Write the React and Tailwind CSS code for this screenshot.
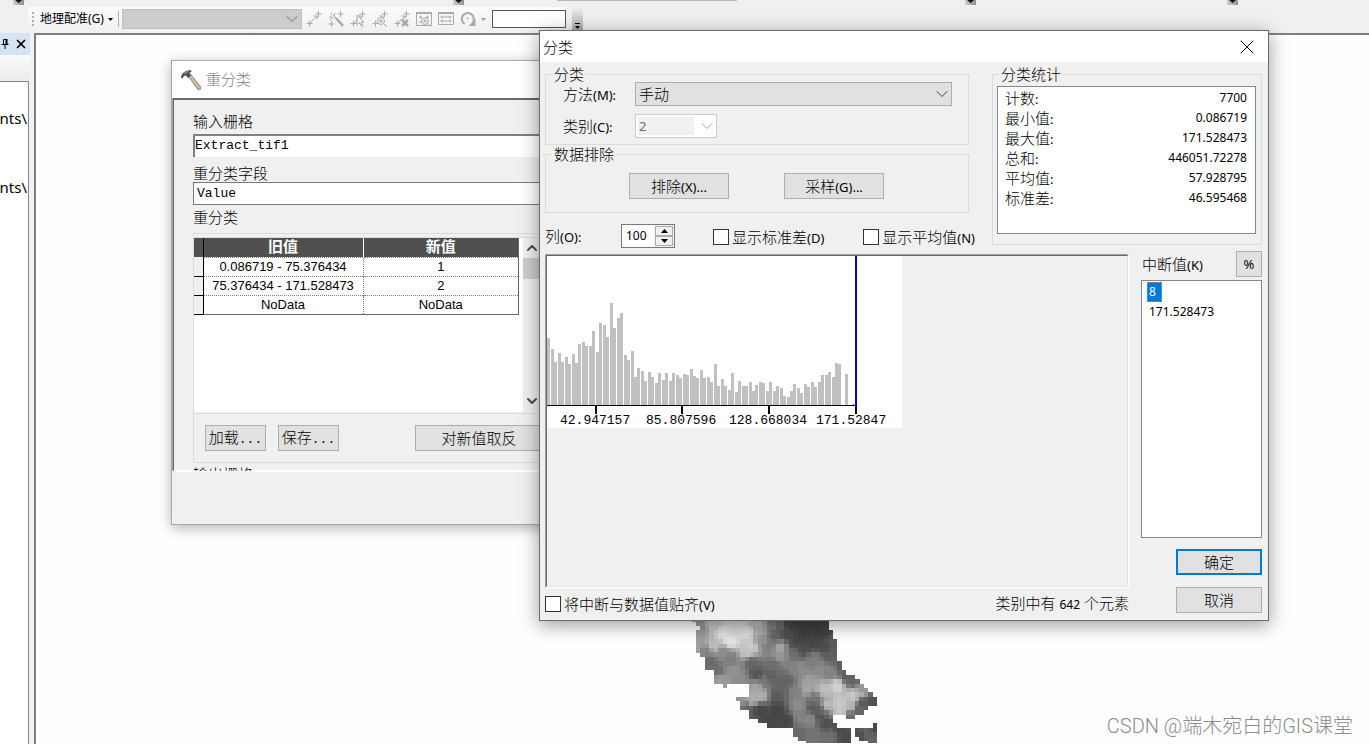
import React, { useState } from 'react';
import { ChevronDown, ChevronUp, X } from 'lucide-react';

// [x, height] of every histogram column
const BARS = [
  [0, 67], [4, 56], [7, 43], [11, 52], [14, 43], [18, 48], [21, 41], [25, 51], [28, 42], [31, 61],
  [35, 63], [38, 59], [42, 59], [45, 74], [49, 53], [52, 82], [56, 80], [59, 68], [63, 102], [66, 77],
  [70, 87], [73, 92], [77, 50], [80, 45], [84, 54], [87, 28], [90, 37], [94, 34], [97, 24], [101, 33],
  [104, 28], [108, 22], [111, 32], [115, 25], [118, 32], [122, 24], [125, 32], [129, 30], [132, 27], [136, 31],
  [139, 30], [143, 36], [146, 29], [149, 27], [153, 35], [156, 27], [160, 28], [163, 23], [167, 41], [170, 19],
  [174, 26], [177, 19], [181, 15], [184, 32], [188, 13], [191, 24], [195, 19], [198, 19], [202, 23], [205, 14],
  [208, 20], [212, 23], [215, 22], [219, 14], [222, 23], [226, 14], [229, 19], [233, 17], [236, 9], [240, 8],
  [243, 14], [246, 21], [250, 17], [253, 12], [257, 21], [260, 18], [264, 23], [267, 18], [271, 23], [274, 30],
  [278, 30], [281, 33], [285, 28], [288, 42], [291, 41], [298, 31], [305, 1],
];

const TICKS = [
  { x: 48, label: '42.947157', textX: 13 },
  { x: 134, label: '85.807596', textX: 99 },
  { x: 221, label: '128.668034', textX: 182 },
  { x: 308, label: '171.52847', textX: 269 },
];

const STATS = [
  ['计数', '7700'],
  ['最小值', '0.086719'],
  ['最大值', '171.528473'],
  ['总和', '446051.72278'],
  ['平均值', '57.928795'],
  ['标准差', '46.595468'],
];

const RECLASS_ROWS = [
  ['0.086719 - 75.376434', '1'],
  ['75.376434 - 171.528473', '2'],
  ['NoData', 'NoData'],
];

// filled column spans per raster row
const RASTER_ROWS = [
  [[0, 31]], [[1, 31]], [[2, 31]], [[1, 32]], [[1, 32]], [[1, 33]], [[1, 33]], [[1, 33]], [[2, 33]], [[3, 33]],
  [[3, 34]], [[3, 34]], [[5, 35]], [[5, 37]], [[5, 38]], [[7, 8], [13, 39]], [[13, 40]], [[13, 41]], [[10, 42]],
  [[11, 42]], [[11, 40]], [[13, 39]], [[13, 32], [35, 37]], [[15, 32]], [[17, 33], [41, 42]], [[23, 36], [37, 42]],
  [[23, 36], [37, 42]], [[24, 36], [38, 42]], [[26, 36], [40, 42]],
];

// [x, y, gray] elevation samples
const SAMPLES = [
  [60, 60, 150], [50, 110, 160], [100, 45, 200], [130, 70, 225], [170, 60, 215], [150, 95, 228], [200, 70, 222],
  [215, 110, 205], [100, 110, 190], [240, 60, 175], [235, 40, 190], [240, 100, 150], [270, 55, 130], [300, 50, 110],
  [285, 80, 100], [350, 45, 65], [400, 45, 62], [440, 50, 68], [350, 90, 68], [400, 100, 70], [455, 100, 90],
  [320, 75, 78], [330, 45, 70], [375, 70, 62], [420, 75, 64], [430, 112, 76], [370, 118, 76], [345, 112, 80],
  [450, 140, 95], [300, 115, 165], [300, 140, 150], [265, 110, 125], [340, 130, 110], [80, 125, 130], [130, 130, 140],
  [200, 125, 195], [90, 160, 105], [110, 185, 110], [150, 150, 125], [160, 185, 145], [120, 210, 155], [135, 235, 160],
  [180, 210, 140], [215, 165, 100], [230, 195, 85], [270, 200, 95], [280, 170, 110], [250, 215, 120], [230, 235, 165],
  [240, 260, 175], [215, 270, 175], [180, 275, 150], [190, 295, 110], [200, 305, 90], [240, 300, 70], [290, 300, 68],
  [320, 335, 70], [270, 340, 70], [300, 240, 100], [320, 210, 100], [290, 260, 90], [340, 180, 130], [360, 180, 140],
  [420, 180, 138], [400, 150, 125], [450, 190, 130], [390, 220, 160], [380, 240, 165], [350, 250, 130], [430, 240, 190],
  [470, 230, 210], [480, 280, 200], [520, 260, 200], [440, 290, 190], [540, 250, 175], [510, 290, 185], [480, 305, 200],
  [500, 200, 95], [490, 170, 90], [520, 215, 100], [545, 240, 150], [550, 280, 90], [580, 275, 80], [535, 300, 100],
  [510, 322, 110], [400, 295, 90], [400, 270, 115], [355, 290, 140], [360, 330, 130], [390, 330, 135], [420, 320, 85],
  [440, 345, 80], [480, 360, 75], [500, 390, 75], [450, 380, 110], [400, 380, 115], [360, 370, 105], [430, 300, 110],
  [560, 370, 100], [540, 380, 80], [580, 350, 70], [575, 395, 100],
];

const grayAt = (x, y) => {
  let sum = 0;
  let total = 0;
  SAMPLES.forEach(([sx, sy, g]) => {
    const d = (sx - x) ** 2 + (sy - y) ** 2 + 20;
    const w = 1 / (d * d);
    sum += w * g;
    total += w;
  });
  return Math.round(sum / total);
};

const RasterLayer = () => (
  <svg className="absolute left-[644px] top-[574px] w-[220px] h-[134px]" viewBox="0 0 660 402" shapeRendering="crispEdges">
    {RASTER_ROWS.map((spans, r) =>
      spans.map(([from, to]) =>
        Array.from({ length: to - from }, (_, i) => {
          const x = 34.75 + (from + i) * 13.25;
          const y = 24 + r * 13.3;
          const g = grayAt(x + 6, y + 6);
          return <rect key={`${r}-${from + i}`} x={x} y={y} width="13.5" height="13.5" fill={`rgb(${g},${g},${g})`} />;
        })
      )
    )}
  </svg>
);

// Latin part of a label, a bit smaller than the Chinese text
const En = ({ children }) => <span className="text-[13px] font-normal">{children}</span>;

const Dots = () => <span className="font-['Liberation_Mono',monospace] text-[13px]">...</span>;

const points = <path d="M5.5 12.5 12 6M13.5 1v6M10.5 4h6M4.5 10.500v6M1.5 13.500h6M8.500 6h3.500v3.500" />;

const TOOL_ICONS = [
  { name: '添加控制点', body: points },
  { name: '自动配准', body: <><path d="M13.5 1v6M10.5 4h6M4.500 11v6M1.500 14h6M9 8l7 8" /><path d="M9 8l7 8" strokeWidth="2.500" /><path d="M4 3l1 2M8 3l-1 3M2 7h3M7 7l-4 3M6 5l3 3" /></> },
  { name: '选择链接', body: <>{points}<path d="M8 5v10l2.500-2.500 2 4 1.500-1-2-3.500h3z" fill="#f4f4f4" /></> },
  { name: '缩放至链接', body: <>{points}<circle cx="10" cy="11" r="3.500" fill="#f4f4f4" /><path d="M8 11h4M10 9v4M12.500 13.500l3 3" /></> },
  { name: '删除链接', body: <>{points}<path d="M9 10l6 6M15 10l-6 6" strokeWidth="2.500" /></> },
  { name: '查看器', body: <><path d="M1.500 2.500h15v13h-15z" /><path d="M1.500 3h15" strokeWidth="2" /><path d="M4 7h3M5.500 5.500v3M11 7h3M12.500 5.500v3M4 12h3" /><circle cx="10" cy="11" r="3.500" fill="#f4f4f4" /><path d="M8 11h4M10 9v4M12.500 13.500l3 3" /></> },
  { name: '链接表', body: <><path d="M1.500 2.500h15v12h-15z" /><path d="M1.500 3h15" strokeWidth="2" /><path d="M3.500 7h11M5 5.500v3M13 5.500v3M3.500 11h11M5 9.500v3M13 9.500v3" /></> },
  { name: '旋转', body: <><path d="M5.500 14A6 6 0 1 1 14 12" strokeWidth="2" /><path d="M16.500 9v7h-7z" fill="#a9a9a9" stroke="none" /><path d="M7.500 8.500h2M8.500 7.500v2" /></> },
];

const Nub = () => (
  <div className="w-[11px] h-[5px] shrink-0 bg-linear-to-r from-[#d0d0d0] to-[#8f8f8f] flex justify-center">
    <svg className="w-[7px] h-1" viewBox="0 0 7 4"><path d="M0 0h7L3.500 3z" fill="#111" /></svg>
  </div>
);

const Toolbar = () => (
  <header className="shrink-0 bg-[#f0f0f0] font-normal">
    <div className="flex h-[7px]">
      <div className="w-6 flex justify-end"><Nub /></div>
      <div className="w-[440px] flex justify-end"><Nub /></div>
      <div className="w-[512px] flex justify-between">
        <div className="ml-[93px] w-[180px] h-px bg-[#b8b8b8]" />
        <Nub />
      </div>
      <div className="w-[262px] flex justify-end"><Nub /></div>
    </div>
    <div className="flex h-[26px] ml-7">
      <div className="flex items-center bg-linear-to-b from-[#fbfbfb] to-[#f0f0f0] pl-1 pb-[2px]">
        <div className="w-0 h-[14px] border-l-2 border-dotted border-[#b0b0b0]" />
        <button className="flex items-center gap-1 ml-[6px] text-xs whitespace-nowrap">
          地理配准(G)
          <svg className="w-[5px] h-[3px]" viewBox="0 0 5 3"><path d="M0 0h5L2.500 3z" /></svg>
        </button>
        <div className="w-px h-4 bg-[#b0b0b0] ml-[5px] mr-[3px]" />
        <div className="relative">
          <select disabled aria-label="配准图层" className="appearance-none block w-[180px] h-5 bg-[#cccccc] border border-[#bfbfbf]" />
          <ChevronDown className="absolute right-0 top-0 size-5 text-[#a0a0a0]" strokeWidth={1.5} />
        </div>
        <div className="flex items-center gap-1 ml-[3px]">
          {TOOL_ICONS.map((icon) => (
            <button key={icon.name} disabled aria-label={icon.name} className="size-[18px]">
              <svg className="size-[18px]" viewBox="0 0 18 18" fill="none" stroke="#a9a9a9">{icon.body}</svg>
            </button>
          ))}
        </div>
        <svg className="w-[5px] h-[3px] ml-1" viewBox="0 0 5 3"><path d="M0 0h5L2.500 3z" fill="#a0a0a0" /></svg>
        <input aria-label="旋转角度" className="w-[74px] h-[18px] ml-[6px] bg-white border border-[#555]" />
      </div>
      <div className="w-[11px] ml-[6px] bg-linear-to-b from-[#f0f0f0] to-[#a0a0a0] flex flex-col items-center justify-end gap-[2px] pb-1">
        <div className="w-[5px] h-px bg-black" />
        <svg className="w-[5px] h-[3px]" viewBox="0 0 5 3"><path d="M0 0h5L2.500 3z" /></svg>
      </div>
    </div>
  </header>
);

const ContentsPanel = () => (
  <aside className="w-[34px] shrink-0 flex flex-col bg-[#f3f1f3] overflow-hidden font-normal">
    <div className="w-[30px] h-[22px] bg-[#d6e3f2] flex items-center gap-[6px]">
      <button aria-label="固定" className="ml-px">
        <svg className="w-2 h-[10px]" viewBox="0 0 8 10" fill="none" stroke="#000"><path d="M2.500 5.500v-5h3M0.500 5.500h7M4 6v4" /><path d="M5.500 0v6" strokeWidth="2" /></svg>
      </button>
      <button aria-label="关闭"><X className="size-[14px] -m-px" strokeWidth={3} /></button>
    </div>
    <div className="w-[30px] h-[26px] bg-linear-to-b from-[#fafafa] to-[#ececec]" />
    <div className="w-[29px] flex-1 bg-white border-t border-r border-[#828790] flex flex-col items-end pr-px pt-[26px] gap-[49px] text-[15px] leading-5">
      <span className="whitespace-nowrap">nts\</span>
      <span className="whitespace-nowrap">nts\</span>
    </div>
  </aside>
);

const Hammer = () => (
  <svg className="size-[22px]" viewBox="0 0 22 22">
    <path d="M8 7l2.500-2L21 18l-.5 2.500-2.500.5z" fill="#b9a78c" stroke="#8b8171" strokeWidth=".6" />
    <path d="M10 7l9.500 12" stroke="#ded2bd" />
    <path d="M1 9c0-3 1.500-5 4-6.500L9.500 1 12 2l-2.500 2 1.500 2.500-3 2.500-2-2.500L4 7 2.500 9.500z" fill="#4d5358" />
    <path d="M4 4.500 8.500 2.500" stroke="#a3abb1" />
  </svg>
);

const pushButton = 'h-[26px] bg-[#e1e1e1] border border-[#adadad] hover:bg-[#e5f1fb] hover:border-[#0078d7]';

const ReclassifyWindow = () => (
  <section className="absolute left-[171px] top-[60px] w-[430px] flex flex-col bg-[#f0f0f0] border border-[#a8a8a8] shadow-[0_3px_12px_rgba(0,0,0,0.3)] text-[15px]">
    <div className="h-[37px] flex items-center bg-white pl-2 gap-1 text-[#808080]">
      <Hammer />
      <h1>重分类</h1>
    </div>
    <div className="h-[373px] overflow-hidden border-l border-[#a0a0a0]">
      <div className="h-full border-t-2 border-l border-b border-t-[#696969] border-l-[#696969] border-b-white pl-[19px] pt-[11px] leading-5">
        <label htmlFor="in-raster" className="block h-[23px]">输入栅格</label>
        <input
          id="in-raster"
          defaultValue="Extract_tif1"
          className="block w-full h-[23px] pb-[2px] bg-white border-t-2 border-l-2 border-[#808080] font-['Liberation_Mono',monospace] font-normal text-[13px]"
        />
        <label htmlFor="field" className="block h-[25px] pt-[6px]">重分类字段</label>
        <select id="field" className="appearance-none block w-full h-[23px] pl-[3px] bg-white border border-[#7a7a7a] font-['Liberation_Mono',monospace] font-normal text-[13px]">
          <option>Value</option>
        </select>
        <p className="h-7 pt-[2px]">重分类</p>
        <div className="border border-[#dcdcdc] pt-[3px]">
          <div className="h-[175px] flex bg-white border-t border-[#dcdcdc]">
            <table className="w-[325px] self-start table-fixed border-collapse text-center font-['Liberation_Sans','Noto_Sans_CJK_SC',sans-serif] font-normal text-[13px] leading-[18px] border-r border-b border-[#696969]">
              <colgroup>
                <col className="w-[9px]" />
                <col className="w-[160px]" />
                <col />
              </colgroup>
              <thead>
                <tr className="bg-[#505050] text-white text-[15px]">
                  <th className="border-r border-black" />
                  <th className="border-l border-white h-[19px]">旧值</th>
                  <th className="border-l border-white">新值</th>
                </tr>
              </thead>
              <tbody>
                {RECLASS_ROWS.map(([oldValue, newValue]) => (
                  <tr key={oldValue} className="h-[19px]">
                    <td className="bg-[#f0f0f0] border-r border-b border-black" />
                    <td className="border-t border-r border-dotted border-[#808080]">{oldValue}</td>
                    <td className="border-t border-dotted border-t-[#808080]">{newValue}</td>
                  </tr>
                ))}
              </tbody>
            </table>
            <div className="w-[17px] ml-1 bg-[#f0f0f0] flex flex-col items-center">
              <ChevronUp className="size-4 my-[2px] text-[#505050]" strokeWidth={3} />
              <div className="w-full h-[21px] bg-[#cdcdcd]" />
              <ChevronDown className="size-4 mt-auto mb-[3px] text-[#505050]" strokeWidth={3} />
            </div>
          </div>
          <div className="flex mt-px pt-[11px] pb-[11px] pl-[11px] border-t border-[#dcdcdc]">
            <button className={`${pushButton} w-[61px]`}>加载<Dots /></button>
            <button className={`${pushButton} w-[61px] ml-3`}>保存<Dots /></button>
            <button className={`${pushButton} w-[128px] ml-[76px]`}>对新值取反</button>
          </div>
        </div>
        <p className="pt-px">输出栅格</p>
      </div>
    </div>
    <div className="h-[53px] border-t border-white" />
  </section>
);

const Histogram = () => (
  <svg className="w-[355px] h-[172px] bg-white" viewBox="0 0 355 172">
    <g shapeRendering="crispEdges">
      {BARS.map(([x, h]) => (
        <rect key={x} x={x} y={149 - h} width="3" height={h} fill="#c0c0c0" />
      ))}
      <rect x="0" y="149" width="308" height="1" />
      {TICKS.map((tick) => (
        <rect key={tick.x} x={tick.x} y="149" width="2" height="9" />
      ))}
      <rect x="308" y="0" width="2" height="150" fill="#0000e6" />
    </g>
    {TICKS.map((tick) => (
      <text key={tick.label} x={tick.textX} y="168" className="font-['Liberation_Mono',monospace] font-normal text-[13px]">{tick.label}</text>
    ))}
  </svg>
);

const CheckBox = ({ label, hotkey }) => (
  <label className="flex items-center gap-[3px] whitespace-nowrap">
    <input type="checkbox" className="appearance-none size-4 bg-white border border-[#333] checked:bg-[#0078d7]" />
    <span>{label}<En>({hotkey})</En></span>
  </label>
);

const ClassifyWindow = () => {
  const [columns, setColumns] = useState(100);

  return (
    <section className="absolute left-[539px] top-[30px] w-[730px] bg-[#f0f0f0] border border-[#6b6b6b] shadow-[0_4px_18px_rgba(0,0,0,0.4)] text-[15px] leading-4">
      <div className="h-[31px] flex items-center justify-between bg-white pl-[3px] pr-[9px]">
        <h1>分类</h1>
        <button aria-label="关闭"><X className="size-6" strokeWidth={1} /></button>
      </div>
      <div className="pl-[5px] pr-[6px] pt-1 pb-[7px]">
        <div className="flex justify-between">
          <div className="w-[430px]">
            <fieldset className="mr-[6px] border border-[#dcdcdc] pl-[17px] pr-4 pb-[6px]">
              <legend className="-ml-[11px] px-[2px]">分类</legend>
              <div className="flex items-center">
                <label htmlFor="method" className="w-[72px]">方法<En>(M):</En></label>
                <div className="relative flex-1">
                  <select id="method" className="appearance-none block w-full h-6 pl-[3px] bg-[#e1e1e1] border border-[#adadad]">
                    <option>手动</option>
                  </select>
                  <ChevronDown className="absolute right-0 top-[2px] size-5 text-[#444] pointer-events-none" strokeWidth={1.2} />
                </div>
              </div>
              <div className="flex items-center mt-2">
                <label htmlFor="classes" className="w-[72px]">类别<En>(C):</En></label>
                <div className="flex items-center w-[82px] h-6 pl-[2px] bg-white border border-[#cccccc]">
                  <input id="classes" disabled defaultValue="2" className="w-14 h-[18px] pl-px bg-[#f0f0f0] text-[13px] font-normal text-[#6d6d6d]" />
                  <ChevronDown className="size-5 ml-[3px] shrink-0 text-[#a8a8a8]" strokeWidth={1.2} />
                </div>
              </div>
            </fieldset>
            <fieldset className="mt-px mr-[6px] border border-[#dcdcdc] pb-[13px]">
              <legend className="ml-[6px] px-[2px]">数据排除</legend>
              <div className="flex pl-[83px] pt-[11px] gap-[55px]">
                <button className={`${pushButton} w-[100px]`}>排除<En>(X)...</En></button>
                <button className={`${pushButton} w-[100px]`}>采样<En>(G)...</En></button>
              </div>
            </fieldset>
            <div className="flex items-center mt-[11px]">
              <label htmlFor="columns" className="w-[76px]">列<En>(O):</En></label>
              <div className="flex w-[54px] h-6 border border-[#7a7a7a] bg-white">
                <input
                  id="columns"
                  value={columns}
                  onChange={(e) => setColumns(Number(e.target.value) || 0)}
                  className="w-8 pl-1 text-xs font-normal"
                />
                <div className="flex-1 flex flex-col bg-[#f0f0f0] p-px">
                  <button aria-label="增加" onClick={() => setColumns(columns + 1)} className="flex-1 flex items-center justify-center border border-[#adadad]">
                    <svg className="w-[7px] h-1" viewBox="0 0 7 4"><path d="M0 4h7L3.500 0z" /></svg>
                  </button>
                  <button aria-label="减少" onClick={() => setColumns(columns - 1)} className="flex-1 flex items-center justify-center border border-[#adadad]">
                    <svg className="w-[7px] h-1" viewBox="0 0 7 4"><path d="M0 0h7L3.500 4z" /></svg>
                  </button>
                </div>
              </div>
              <div className="flex-1 flex justify-between pl-[38px] pt-[2px]">
                <CheckBox label="显示标准差" hotkey="D" />
                <CheckBox label="显示平均值" hotkey="N" />
              </div>
            </div>
          </div>
          <fieldset className="w-[270px] h-[179px] border border-[#dcdcdc] pl-1 pr-[5px] pt-1 pb-[10px]">
            <legend className="ml-[2px] px-[2px]">分类统计</legend>
            <dl className="h-[148px] bg-white border border-[#828790] pl-[7px] pr-2 pt-px">
              {STATS.map(([name, value]) => (
                <div key={name} className="flex items-center justify-between h-5">
                  <dt>{name}<En>:</En></dt>
                  <dd className="text-xs font-normal">{value}</dd>
                </div>
              ))}
            </dl>
          </fieldset>
        </div>
        <div className="flex justify-between mt-[3px]">
          <div className="flex-1 flex flex-col pt-[3px]">
            <div className="h-[334px] border border-t-[#a0a0a0] border-l-[#a0a0a0] border-r-white border-b-white">
              <div className="h-full border border-t-[#696969] border-l-[#696969] border-r-[#e3e3e3] border-b-[#e3e3e3]">
                <Histogram />
              </div>
            </div>
            <div className="flex items-center justify-between mt-[7px]">
              <CheckBox label="将中断与数据值贴齐" hotkey="V" />
              <span>类别中有 <span className="text-xs font-normal">642</span> 个元素</span>
            </div>
          </div>
          <div className="w-[121px] ml-3 flex flex-col">
            <div className="flex items-center justify-between pl-px">
              <h2>中断值<En>(K)</En></h2>
              <button className={`${pushButton} w-[26px] text-[13px] font-normal`}>%</button>
            </div>
            <ul className="h-[258px] mt-[3px] bg-white border border-[#828790] pl-[5px] pt-px text-xs font-normal leading-5">
              <li><span className="inline-block w-[15px] pl-[2px] bg-[#0078d7] text-white outline-1 -outline-offset-1 outline-dotted outline-[#ff8728]">8</span></li>
              <li className="pl-[2px]">171.528473</li>
            </ul>
            <button className="self-end w-[86px] h-[26px] mt-[11px] bg-[#e1e1e1] border-2 border-[#0078d7]">确定</button>
            <button className={`${pushButton} self-end w-[86px] mt-3`}>取消</button>
          </div>
        </div>
      </div>
    </section>
  );
};

const App = () => {
  return (
    <div className="relative h-screen flex flex-col overflow-hidden bg-[#f0f0f0] text-black font-light font-['Noto_Sans','Noto_Sans_CJK_SC',sans-serif]">
      <Toolbar />
      <div className="flex flex-1 min-h-0">
        <ContentsPanel />
        <main className="relative flex-1 overflow-hidden bg-[#fdfefe] border-t-2 border-l-2 border-[#808080]">
          <RasterLayer />
        </main>
      </div>
      <ReclassifyWindow />
      <ClassifyWindow />
      <p className="absolute right-4 bottom-1 text-[20px] leading-7 text-[#8c8c8c] font-['Roboto','Noto_Sans_CJK_SC',sans-serif]">
        CSDN @端木宛白的GIS课堂
      </p>
    </div>
  );
};

export default App;
